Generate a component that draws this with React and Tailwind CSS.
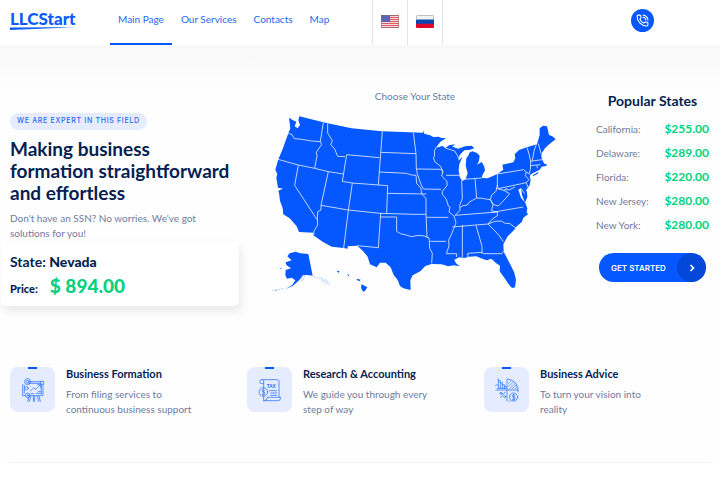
import React from 'react';
import { PhoneCall } from 'lucide-react';

const navItems = ['Main Page', 'Our Services', 'Contacts', 'Map'];

const popularStates = [
  ['California:', '$255.00'],
  ['Delaware:', '$289.00'],
  ['Florida:', '$220.00'],
  ['New Jersey:', '$280.00'],
  ['New York:', '$280.00'],
];

function Logo() {
  return (
    <a href="#" aria-label="LLCStart" className="flex w-[67px] flex-col text-[#0a5cff]">
      <span className="text-[17px] leading-[16px] font-black">LLCStart</span>
      <svg viewBox="0 0 67 5" className="h-[5px] w-full">
        <defs>
          <linearGradient id="swoosh">
            <stop offset="0" stopColor="#0a5cff" />
            <stop offset="0.75" stopColor="#2a72ff" />
            <stop offset="1" stopColor="#a9c6ff" />
          </linearGradient>
        </defs>
        <path d="M0 0.600 L67 0 Q40 1.600 0 3Z" fill="url(#swoosh)" />
      </svg>
    </a>
  );
}

function UsFlag() {
  return (
    <svg viewBox="0 0 18 13" className="h-[13px] w-[18px]">
      <rect width="18" height="13" rx="1" fill="#f6d8db" />
      {[0, 2, 4, 6, 8, 10, 12].map((y) => (
        <rect key={y} y={y} width="18" height="1" fill="#dc5b66" />
      ))}
      <rect width="9" height="7" fill="#5a5fb0" />
      {[1, 3, 5].map((y) => (
        <path key={y} d={`M1 ${y + 0.5}H8.5`} stroke="#7a7dc4" strokeWidth="0.7" strokeDasharray="0.8 1" />
      ))}
      <rect x="0.5" y="0.5" width="17" height="12" rx="1" fill="none" stroke="#777" strokeOpacity="0.5" />
    </svg>
  );
}

function RuFlag() {
  return (
    <svg viewBox="0 0 18 13" className="h-[13px] w-[18px]">
      <rect width="18" height="13" rx="1" fill="#f2f2f2" />
      <rect y="4.5" width="18" height="4.5" fill="#0b49b0" />
      <path d="M0 8.7H18V12a1 1 0 0 1-1 1H1a1 1 0 0 1-1-1Z" fill="#e0082d" />
      <path d="M0.5 5V1.5a1 1 0 0 1 1-1h15a1 1 0 0 1 1 1V5" fill="none" stroke="#aaa" strokeOpacity="0.7" />
    </svg>
  );
}

function UsMap() {
  return (
    <svg viewBox="0 0 900 600" className="h-auto w-[300px] max-w-full" role="img" aria-label="Map of the United States">
      <g fill="#0558ff">
        <path d="M72 38 84 46 94 50 89 64 98 70 105 60 100 46 103 34 175 52 188 55 260 70 350 79 474 83V76L478 86 495 91 505 96 520 95 530 99 544 100 528 109 513 128 529 121 541 129 552 121 570 118 562 125 580 131 600 124 620 122 628 130 615 134 598 136 584 150 580 167 592 155 583 178 581 195 584 216 592 228 602 222 608 205 602 182 604 160 611 150 613 143 622 139 636 144 644 152 642 168 636 179 650 171 657 183 660 196 653 209 650 219 668 220 697 207 715 194 712 179 745 172 751 160 749 148 762 135 785 127 816 118 820 104 824 90 824 70 834 62 846 64 852 90 862 94 872 103 860 112 850 120 840 130 832 142 829 152 831 163 838 176 846 178 843 183 830 185 824 194 800 206 794 214 797 225 794 240 784 255 779 243 786 262 787 276 780 293 771 270 768 250 760 254 768 278 781 294 787 310 785 322 789 328 775 338 771 350 757 362 745 377 727 395 715 418 716 440 730 467 738 482 748 503 753 525 750 547 741 549 731 538 718 518 704 499 705 482 693 474 679 461 665 466 648 460 634 454 611 455 598 459 583 457 568 464 573 475 584 484 566 481 550 484 530 478 500 477 481 483 466 499 443 511 436 526 437 555 415 550 405 543 398 525 386 510 377 487 362 473 345 473 335 487 315 478 308 455 293 437 277 422 248 424 248 431 236 429 200 425 173 410 144 390 146 383 102 381 95 364 74 340 55 328 53 310 45 287 42 264 40 257 54 251 39 248 34 218 37 206 31 195 39 166 53 132 70 85 76 70Z" />
        <path d="M74 445 92 440 106 445 130 447 143 512 127 510 115 510 103 525 84 542 60 553 82 540 91 526 80 518 66 521 61 510 62 495 78 490 64 480 62 472 80 466 67 454Z" />
        <path d="M290 538 307 547 300 557 294 560 288 548ZM275 521 287 524 283 529 276 525ZM247 507 253 511 250 514ZM217 497 223 498 222 503 217 501Z" />
        <path d="m803 211 18-11-3 6-14 8ZM31 556l6-1-5 3ZM44 489l8 2-7 1Z" />
      </g>
      <path d="m112 512 8-2-5 14-7 4Zm32 2 20 7m0-4 12 10m-6-7 20 14m-20-8 16 12m-4-16 12 18M22 556l36-5" fill="none" stroke="#8db3ff" strokeWidth="2" strokeDasharray="6 3" />
      <g fill="none" stroke="#e3ecff" strokeWidth="2.500" strokeLinejoin="round">
        {/* Pacific and mountain states */}
        <path d="M70 85 80 88 88 101 110 103 140 108 166 110M175 52 166 110 170 118 154 142 156 152 149 190M39 163 100 180 149 190 190 200 235 207M100 180 89 241 157 345M188 55V84L202 107 197 120 208 130 218 154 240 155M245 149 232 229 262 234 368 242M245 149 344 158M352 79 340 240M190 200 168 301M262 234 250 317 236 429M168 301 250 315 345 325 450 328 483 328M157 345 158 320 168 315 168 301M157 345 158 360 147 378 146 390M368 242 365 325M347 325 340 428 277 422" />
        {/* Great Plains */}
        <path d="M348 142 453 146 454 192M343 201 424 205 440 210 453 211M368 265 484 267M445 83 453 145M454 192 530 193M453 211 455 235 468 250 470 267 483 280V328L486 398M347 336H395V379L407 386 423 390 440 395 460 391 478 393 492 399 493 410 494 430 502 445 500 475M454 192 458 210 469 240 475 252 528 253M485 337H550M494 409H543" />
        {/* Mississippi valley */}
        <path d="m513 128-5 10 1 15-4 5 5 13 17 13 7 17-4 12 16 16v13l-14 17v9l12 15 6 20 5 3-3 15 15 12 6 20-7 18-8 20-7 14 1 18-8 23h31v10M543 211H583M541 129l28 9 8 13 6 12M530 193l3 10M590 226l2 55-8 20 1 15-15 15" />
        {/* Midwest and Appalachians */}
        <path d="M597 223 650 219M630 221 635 279 613 291 607 300 594 302 586 307M635 279 652 280 668 283 676 284 680 270 693 259 697 240V207M697 240 699 251 784 233M570 331 682 322 775 306M562 366 632 360 669 357 682 342 697 332 698 321 680 322M592 360V457M633 361 651 424 651 446M609 457 608 445 652 442 655 446 710 446 715 440M669 357 688 376 702 391 715 410M669 357 690 349 710 348 718 354 735 356 754 370M676 284 686 299 700 303 713 290 722 280 734 266 716 256M697 251 716 256 726 250M722 255 734 254 750 246M676 284 684 300 679 317 697 321" />
        {/* Northeast */}
        <path d="M697 207 776 194 784 201 781 212 792 224 784 233 792 255M784 201 797 209M786 127 793 150 797 170 796 194 793 204M814 118 807 138 802 168M820 116 829 148M796 169 831 164M797 182 826 179M816 181 817 190M768 250 779 266" />
      </g>
      <path d="m513 128 14-16 17-10 10 0-12 14-13 8Z" fill="#fff" />
    </svg>
  );
}

function iconProps() {
  return {
    viewBox: '0 0 72 72',
    className: 'size-6',
    fill: 'none',
    stroke: '#3d7dff',
    strokeWidth: 2.5,
    strokeLinecap: 'round',
    strokeLinejoin: 'round',
  };
}

function BoardIcon() {
  return (
    <svg {...iconProps()}>
      <path d="M22 11H62M5 20V53H12M66 20V53H24M22 16H60M10 22V45M61 22V48" />
      <rect x="59" y="10" width="9" height="9" />
      <circle cx="20" cy="11" r="9" /><circle cx="20" cy="11" r="4" />
      <circle cx="20" cy="52" r="7" /><circle cx="20" cy="52" r="2" /><circle cx="17" cy="31" r="5" />
      <path d="M28 39l10-9 6 4 16-15M50 20h9v9M45 46h14M52 41h7M30 47h8M24 56l-4 14M29 56l-4 14M37 54v16M41 54v16M49 54l4 16M54 54l4 16" />
    </svg>
  );
}

function TaxIcon() {
  return (
    <svg {...iconProps()}>
      <path d="M12 5h46q5 0 5 6v45M12 5q-7 0-7 6t7 6h5V5M17 17v14M17 54v14M17 68h43q8 0 8-10H28q0 10-8 10M34 38h22M38 45h18M38 52h18" />
      <circle cx="16" cy="42" r="13" />
      <path d="M20 37q-8-4-8 1t5 4 3 6-8 1M16 33v18" />
      <text x="26" y="29" fontSize="14" fontWeight="900" fill="#2f74ff" stroke="none" fontFamily="Lato, sans-serif">TAX</text>
    </svg>
  );
}

function AdviceIcon() {
  return (
    <svg {...iconProps()}>
      <path d="M8 20A33 33 0 1 0 44 69M39 3A33 33 0 0 1 69 42M36 3v66M3 36h66M10 31V3M10 8h6v23M16 14h6v17M22 20h6v11M28 25h5v6M8 31h25" />
      <path d="M41 16l8-8M41 25l15-14M43 33l18-17M51 33l14-13M60 33l7-7" strokeWidth="2" />
      <circle cx="56" cy="57" r="12" />
      <path d="M60 52q-8-4-8 1t5 4 3 6-8 1M56 48v18M17 58l13-15" />
      <circle cx="18" cy="46" r="3" /><circle cx="29" cy="56" r="3" />
    </svg>
  );
}

const features = [
  { title: 'Business Formation', lines: ['From filing services to', 'continuous business support'], Icon: BoardIcon },
  { title: 'Research & Accounting', lines: ['We guide you through every', 'step of way'], Icon: TaxIcon },
  { title: 'Business Advice', lines: ['To turn your vision into', 'reality'], Icon: AdviceIcon },
];

export default function App() {
  return (
    <div className="bg-[#fefefe] font-['Lato',sans-serif] text-[10px] text-[#6f7b9f]">
      <header className="flex h-[45px] items-stretch bg-white">
        <div className="w-[110px] shrink-0 pt-[11px] pl-[10px]">
          <Logo />
        </div>
        <nav className="flex w-[262px] shrink-0 gap-px">
          {navItems.map((item, i) => (
            <a
              key={item}
              href="#"
              className={`flex items-center border-b-2 px-2 pb-1 text-[10px] text-[#2467f2] ${i === 0 ? 'border-[#0558ff]' : 'border-transparent'}`}
            >
              {item}
            </a>
          ))}
        </nav>
        <div className="flex divide-x divide-[#e6e6e6] border-x border-[#e6e6e6]">
          <button aria-label="English" className="flex w-[35px] items-center justify-center pb-[3px]"><UsFlag /></button>
          <button aria-label="Русский" className="flex w-[34px] items-center justify-center pb-[3px]"><RuFlag /></button>
        </div>
        <a href="#" aria-label="Call us" className="mt-[9px] mr-[66px] ml-auto flex size-[23px] items-center justify-center rounded-full bg-[#0558ff] text-white">
          <PhoneCall size={13} strokeWidth={2} />
        </a>
      </header>

      <main>
        <section className="grid grid-cols-[24fr_35fr_13fr] bg-linear-to-b from-[#f8f8f8] to-[#fefefe] to-[46px] pt-[44px]">
          <div className="pt-6">
            <div className="pl-[10px]">
              <span className="inline-flex h-[17px] items-center rounded-full bg-[#e5ecff] px-[7px] align-top font-['Inter',sans-serif] text-[7px] font-medium tracking-widest text-[#2467f2]">
                WE ARE EXPERT IN THIS FIELD
              </span>
              <h1 className="mt-2 text-[19px] leading-[22px] font-bold text-[#061f52]">
                Making business<br />formation straightforward<br />and effortless
              </h1>
              <p className="mt-[7px] text-[10px] leading-[15px]">
                Don't have an SSN? No worries. We've got<br />solutions for you!
              </p>
            </div>
            <div className="mx-px h-[65px] rounded-[5px] bg-white pt-[11px] pl-[9px] text-[#061f52] shadow-[2px_5px_10px_rgba(0,0,0,0.09)]">
              <p className="text-[14px] leading-5 font-bold">State: <span className="font-black">Nevada</span></p>
              <p className="flex items-baseline gap-3 text-[11px] leading-7 font-black">
                Price: <strong className="text-[19px] font-black text-[#02d27f]">$ 894.00</strong>
              </p>
            </div>
          </div>

          <div className="flex flex-col items-center">
            <p className="text-[10px] leading-[14px]">Choose Your State</p>
            <div className="mt-[2px]">
              <UsMap />
            </div>
          </div>

          <aside className="pr-[11px] pl-[6px]">
            <h2 className="text-center text-[14px] leading-6 font-bold text-[#061f52]">Popular States</h2>
            <dl className="mt-1">
              {popularStates.map(([name, price]) => (
                <div key={name} className="flex h-6 items-center justify-between">
                  <dt className="text-[10px]">{name}</dt>
                  <dd className="text-[12px] font-bold text-[#02d27f]">{price}</dd>
                </div>
              ))}
            </dl>
            <button className="mx-[3px] mt-4 flex h-[29px] w-[107px] items-center justify-between overflow-hidden rounded-full bg-[#0558ff] pl-3 font-['Inter',sans-serif] text-[8px] font-semibold text-white">
              GET STARTED
              <span className="flex size-[29px] items-center justify-center rounded-full bg-[#0348d9]">
                <svg viewBox="0 0 8 10" className="h-[10px] w-2" fill="none" stroke="currentColor" strokeWidth="1.700"><path d="m2.500 2 3 3-3 3" /></svg>
              </span>
            </button>
          </aside>
        </section>

        <section className="mx-[10px] grid grid-cols-3 gap-x-[11px] border-b border-[#f0f0f8] pt-[61px] pb-[45px]">
          {features.map(({ title, lines, Icon }) => (
            <article key={title} className="flex gap-[11px]">
              <div className="flex size-[45px] shrink-0 flex-col items-center rounded-[8px] bg-[#e5ecff]">
                <span className="mb-[9px] h-[2px] w-[9px] bg-[#0558ff]" />
                <Icon />
              </div>
              <div>
                <h3 className="text-[11px] leading-[14px] font-bold text-[#061f52]">{title}</h3>
                <p className="mt-[6px] text-[10px] leading-[15px]">{lines[0]}<br />{lines[1]}</p>
              </div>
            </article>
          ))}
        </section>
      </main>
    </div>
  );
}
